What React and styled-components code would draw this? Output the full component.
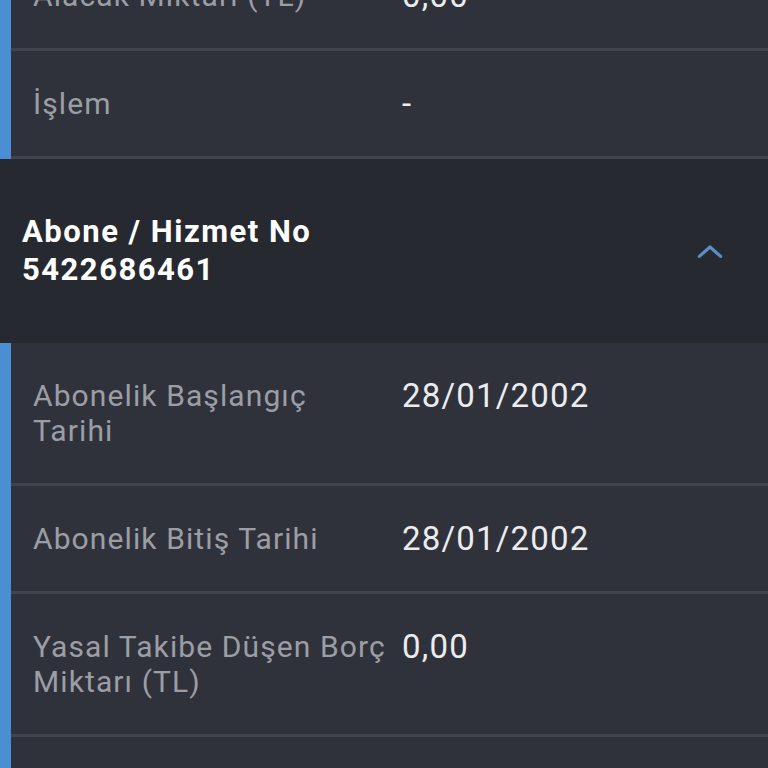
import styled, { createGlobalStyle } from "styled-components";

const GlobalStyle = createGlobalStyle`
  html, body {
    margin: 0;
    padding: 0;
    background: #30323b;
    overflow: hidden;
    font-family: Roboto, "Noto Sans", "Liberation Sans", sans-serif;
  }
`;

const sections = [
  {
    rows: [
      { label: "Alacak Miktarı (TL)", value: "0,00" },
      { label: "İşlem", value: "-" },
    ],
  },
  {
    title: "Abone / Hizmet No",
    number: "5422686461",
    rows: [
      { label: "Abonelik Başlangıç Tarihi", value: "28/01/2002" },
      { label: "Abonelik Bitiş Tarihi", value: "28/01/2002" },
      { label: "Yasal Takibe Düşen Borç Miktarı (TL)", value: "0,00" },
      { label: "Kalan Borç Miktarı (TL)", value: "0,00" },
    ],
  },
];

export default function App() {
  return (
    <>
      <GlobalStyle />
      <Page>
        {sections.map((s, i) => (
          <div key={i}>
            {s.title && (
              <Header>
                <HeaderText>
                  <div>{s.title}</div>
                  <div>{s.number}</div>
                </HeaderText>
                <Chevron viewBox="0 0 24 24">
                  <path d="M4 16 L12 9 L20 16" />
                </Chevron>
              </Header>
            )}
            <Section>
              {s.rows.map((r) => (
                <Row key={r.label}>
                  <Label>{r.label}</Label>
                  <Value>{r.value}</Value>
                </Row>
              ))}
            </Section>
          </div>
        ))}
      </Page>
    </>
  );
}

// page is scrolled: the first row is partly above the top edge
const Page = styled.div`
  margin-top: -57px;
  display: flex;
  flex-direction: column;
`;

const Section = styled.div`
  border-left: 11px solid #4b8ed3;
  background: #30323b;
`;

const Row = styled.div`
  display: flex;
  align-items: flex-start;
  padding: 35px 20px 35px 22px;
  border-bottom: 3px solid #42444c;
`;

const Label = styled.div`
  width: 369px;
  flex-shrink: 0;
  box-sizing: border-box;
  padding-right: 13px;
  font-size: 30px;
  letter-spacing: 1.1px;
  line-height: 35px;
  color: #9c9ea5;
`;

const Value = styled.div`
  font-size: 33px;
  letter-spacing: 1.2px;
  line-height: 35px;
  color: #ececee;
`;

const Header = styled.div`
  display: flex;
  align-items: center;
  justify-content: space-between;
  height: 184px;
  padding: 0 42px 0 22px;
  background: #272930;
  box-sizing: border-box;
`;

const HeaderText = styled.div`
  font-size: 31px;
  font-weight: 700;
  letter-spacing: 1.5px;
  line-height: 38px;
  color: #ffffff;
`;

const Chevron = styled.svg`
  width: 32px;
  height: 32px;
  fill: none;
  stroke: #5a8ec6;
  stroke-width: 2.4;
  stroke-linecap: round;
  stroke-linejoin: round;
`;
